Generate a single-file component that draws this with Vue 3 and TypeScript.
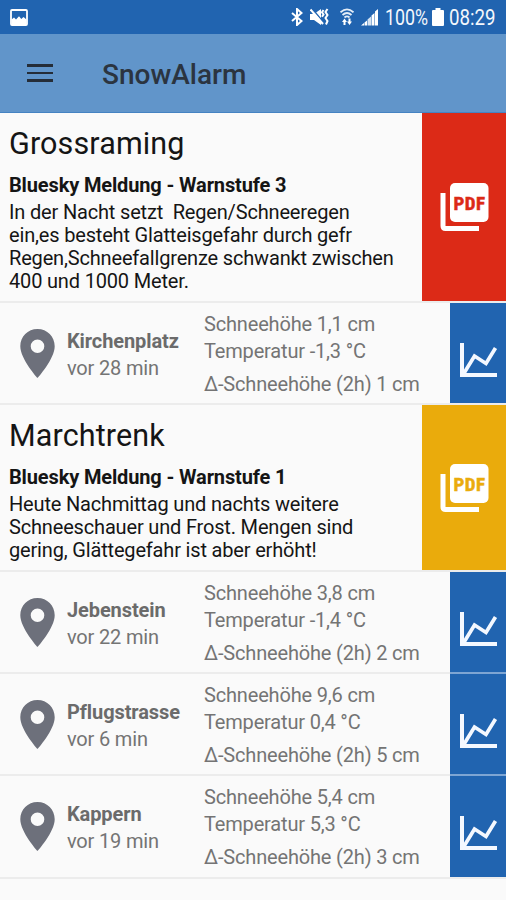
<script setup lang="ts">
interface Station {
  name: string
  age: string
  snow: string
  temp: string
  delta: string
}
interface Region {
  name: string
  level: number
  tone: 'red' | 'amber'
  lines: string[]
  stations: Station[]
}

const regions: Region[] = [
  {
    name: 'Grossraming',
    level: 3,
    tone: 'red',
    lines: [
      'In der Nacht setzt  Regen/Schneeregen',
      'ein,es besteht Glatteisgefahr durch gefr',
      'Regen,Schneefallgrenze schwankt zwischen',
      '400 und 1000 Meter.',
    ],
    stations: [{ name: 'Kirchenplatz', age: 'vor 28 min', snow: '1,1', temp: '-1,3', delta: '1' }],
  },
  {
    name: 'Marchtrenk',
    level: 1,
    tone: 'amber',
    lines: [
      'Heute Nachmittag und nachts weitere',
      'Schneeschauer und Frost. Mengen sind',
      'gering, Glättegefahr ist aber erhöht!',
    ],
    stations: [
      { name: 'Jebenstein', age: 'vor 22 min', snow: '3,8', temp: '-1,4', delta: '2' },
      { name: 'Pflugstrasse', age: 'vor 6 min', snow: '9,6', temp: '0,4', delta: '5' },
      { name: 'Kappern', age: 'vor 19 min', snow: '5,4', temp: '5,3', delta: '3' },
    ],
  },
]
</script>

<template>
  <div class="screen">
    <div class="status">
      <svg class="photo" width="18" height="17" viewBox="0 0 18 17">
        <rect x="1" y="1" width="16" height="15" rx="1" fill="none" stroke="#fff" stroke-width="1.8" />
        <path d="M1.5 16V10.5L4 8.500l2 2 3-3.200 2.300 2.600L13.500 8l3 2.600V16z" fill="#fff" />
      </svg>
      <div class="tray">
        <svg class="bt" width="12" height="18" viewBox="0 0 12 18">
          <path d="M1 5l9.500 8L6 17V1l4.500 4L1 13" fill="none" stroke="#fff" stroke-width="2" />
        </svg>
        <svg class="mute" width="19" height="18" viewBox="0 0 19 18">
          <path d="M0 6h4l7-5v16l-7-5H0z" fill="#fff" />
          <path d="M2 .5l12.500 15" stroke="#2164b0" stroke-width="1.500" />
          <path d="M.5 1.500L13 16" stroke="#fff" stroke-width="2" />
          <path d="M13.500 2l-1.500 2.200 1.500 2.300-1.500 2.200M17.500 1l-2 3 2 3-2 3 2 3-1.500 3.500" fill="none" stroke="#fff" stroke-width="2" />
        </svg>
        <svg class="wifi" width="14" height="18" viewBox="0 0 14 18">
          <path d="M.5 4.200Q7-1.500 13.500 4.200M2.500 7Q7 3 11.500 7M4.500 9.500Q7 7.300 9.500 9.500" fill="none" stroke="#e4edf7" stroke-width="1.800" />
          <path d="M2 14l2.500-3.500L7 14H5.500v3h-2v-3zM7 13.500h1.500v-3h2v3H12L9.500 17z" fill="#fff" />
        </svg>
        <svg class="signal" width="18" height="18" viewBox="0 0 18 18">
          <path d="M0 17.500l3-2.500v2.500zM3.500 14.500l2.500-2v5H3.500z" fill="#fff" />
          <path d="M6.500 11.500l3.500-3v9H6.500z" fill="#d5e3f2" />
          <path d="M10.500 7.500l3-2.500v12.500h-3zM14 3.500L17 1v16.500h-3z" fill="#fff" />
        </svg>
        <span class="pct">100%</span>
        <svg class="batt" width="12" height="18" viewBox="0 0 12 18">
          <path d="M3.500 0h5v2H11q1 0 1 1v14q0 1-1 1H1q-1 0-1-1V3q0-1 1-1h2.500z" fill="#fff" />
        </svg>
        <span class="clock">08:29</span>
      </div>
    </div>

    <header class="bar">
      <div class="menu"><i /><i /><i /></div>
      <h1>SnowAlarm</h1>
    </header>

    <section v-for="r in regions" :key="r.name">
      <div class="region" :class="r.tone">
        <div class="report">
          <h2>{{ r.name }}</h2>
          <h3>Bluesky Meldung - Warnstufe {{ r.level }}</h3>
          <p v-for="l in r.lines" :key="l">{{ l }}</p>
        </div>
        <div class="pdf">
          <svg width="49" height="49" viewBox="0 0 49 49">
            <path d="M.5 10h5v33h33.500v5H5.500q-5 0-5-5z" fill="#fff" />
            <rect x="10" y="0" width="38.500" height="39" rx="5" fill="#fff" />
            <text x="13.500" y="26.500" textLength="31.500" lengthAdjust="spacing">PDF</text>
          </svg>
        </div>
      </div>
      <div v-for="s in r.stations" :key="s.name" class="station">
        <svg class="pin" width="35" height="49" viewBox="0 0 35 49">
          <path d="M17.500 0C7.800 0 .3 7.700.3 17.200.3 30 17.500 49 17.500 49S34.700 30 34.700 17.200C34.700 7.700 27.200 0 17.500 0zm0 10.400a6.800 6.800 0 1 1 0 13.600 6.800 6.800 0 0 1 0-13.600z" fill="#6d707b" />
        </svg>
        <div class="who">
          <b>{{ s.name }}</b>
          <span>{{ s.age }}</span>
        </div>
        <div class="values">
          <span>Schneehöhe {{ s.snow }} cm</span>
          <span>Temperatur {{ s.temp }} °C</span>
          <span class="delta">Δ-Schneehöhe (2h) {{ s.delta }} cm</span>
        </div>
        <div class="chart">
          <svg width="38" height="35" viewBox="0 0 38 35">
            <path d="M2 0v32h35" fill="none" stroke="#f4f8ff" stroke-width="4" />
            <path d="M3.500 31L14.500 13l11.500 7.500L35.500 5" fill="none" stroke="#f4f8ff" stroke-width="3.700" />
          </svg>
        </div>
      </div>
    </section>
  </div>
</template>

<style>
body {
  background: #fafafa;
}
</style>

<style scoped>
.screen {
  width: 506px;
  height: 900px;
  overflow: hidden;
  background: #fafafa;
  font-family: Roboto, 'Liberation Sans', sans-serif;
  color: #151515;
}
.status {
  height: 34px;
  box-sizing: border-box;
  background: #2164b0;
  display: flex;
  justify-content: space-between;
  align-items: center;
  padding: 0 10px;
  color: #f3f7fc;
  font-size: 22px;
}
.tray {
  display: flex;
  align-items: center;
}
.mute {
  margin-left: 7px;
}
.wifi {
  margin-left: 11px;
}
.signal {
  margin-left: 7px;
}
.pct,
.clock {
  transform-origin: 0 50%;
  line-height: 34px;
  padding-top: 1px;
}
.pct {
  margin-left: 6px;
  width: 44px;
  transform: scaleX(0.81);
}
.batt {
  margin-left: 3px;
}
.clock {
  margin-left: 5px;
  width: 47px;
  transform: scaleX(0.85);
}
.bar {
  height: 79px;
  box-sizing: border-box;
  border-bottom: 1px solid #4583c2;
  background: #6195ca;
  display: flex;
  align-items: center;
  padding: 2px 0 0 27px;
}
.menu {
  width: 26px;
  display: grid;
  gap: 5px;
  margin-bottom: 2px;
}
.menu i {
  height: 2.5px;
  background: #252d38;
}
h1 {
  margin: 2px 0 0 49px;
  font-size: 28px;
  font-weight: 500;
  line-height: 34px;
  color: #2b3440;
}
.region {
  display: flex;
  box-sizing: border-box;
  border-bottom: 2px solid #ececec;
}
.region.red {
  height: 190px;
}
.region.amber {
  height: 167px;
}
.report {
  flex: 1;
  padding: 12px 0 0 9px;
}
h2 {
  margin: 0;
  font-size: 30.5px;
  font-weight: 400;
  line-height: 38px;
  letter-spacing: 0.13px;
}
h3 {
  margin: 10px 0 3px;
  font-size: 20px;
  font-weight: 700;
  line-height: 25px;
  letter-spacing: -0.14px;
}
p {
  margin: 0;
  font-size: 20px;
  line-height: 23px;
  letter-spacing: -0.17px;
  white-space: pre;
}
.pdf {
  width: 84px;
  display: flex;
  align-items: center;
  justify-content: center;
}
.red .pdf {
  background: #dc2a17;
}
.amber .pdf {
  background: #eaab0c;
  padding-top: 1px;
  box-sizing: border-box;
}
.pdf text {
  font: 700 19px 'Roboto Condensed', Roboto, sans-serif;
  font-stretch: condensed;
  stroke-width: 0.5px;
}
.red text {
  fill: #dc2a17;
  stroke: #dc2a17;
}
.amber text {
  fill: #eaab0c;
  stroke: #eaab0c;
}
.station {
  height: 102.15px;
  box-sizing: border-box;
  display: flex;
  align-items: flex-start;
  padding-left: 19.5px;
  background: linear-gradient(#ececec, #ececec) bottom / 100% 2px no-repeat;
  font-size: 20px;
  letter-spacing: -0.17px;
  color: #747474;
}
.pin {
  margin-top: 26px;
}
.who {
  width: 137px;
  margin: 25px 0 0 12.5px;
  display: grid;
  line-height: 27px;
}
.who b {
  color: #6b6b6b;
  letter-spacing: -0.1px;
}
.values {
  flex: 1;
  padding-top: 8px;
  display: grid;
  line-height: 27px;
  white-space: nowrap;
}
.delta {
  margin-top: 6px;
}
.chart {
  width: 56px;
  height: 100.3px;
  padding: 40px 0 0 10px;
  box-sizing: border-box;
  background: #2164b0;
}
.station:not(:last-child) .chart {
  height: 102.15px;
  border-bottom: 2px solid #7ea5d3;
}
</style>
